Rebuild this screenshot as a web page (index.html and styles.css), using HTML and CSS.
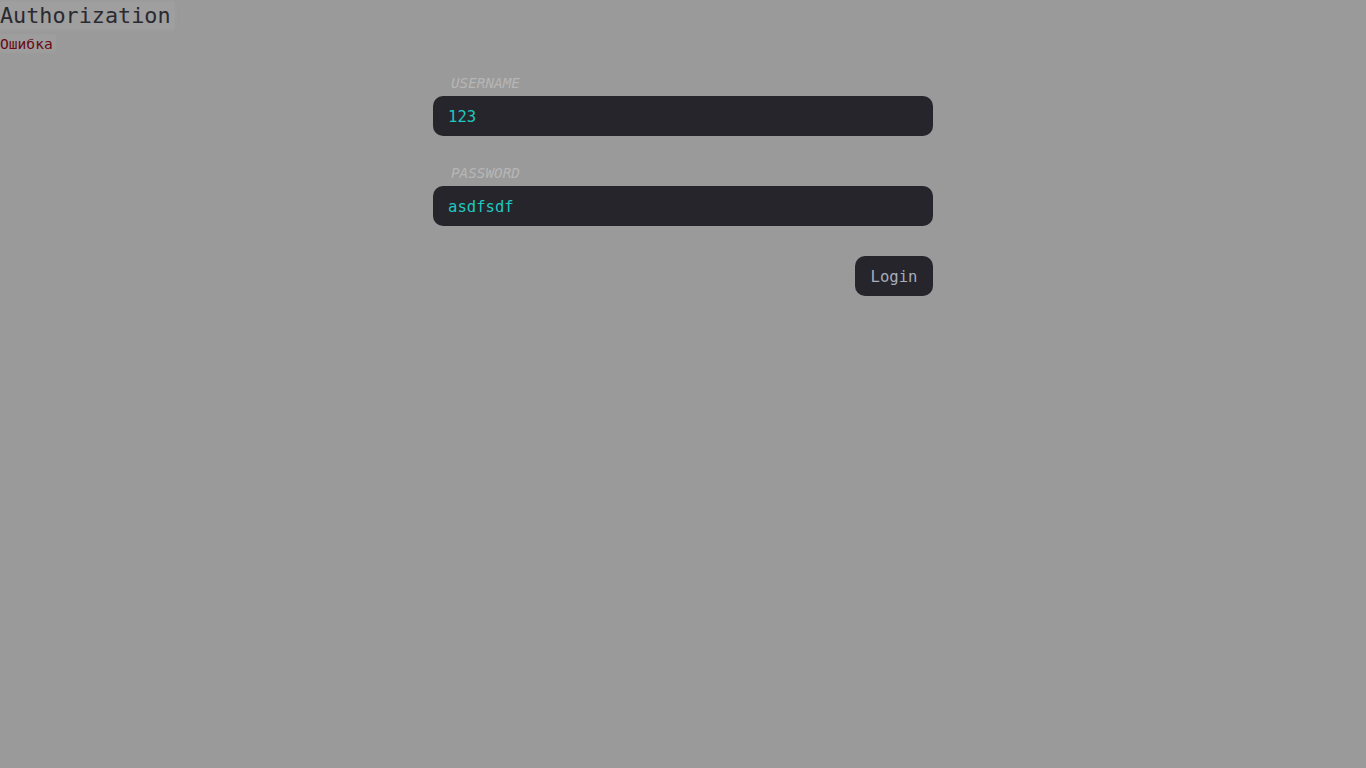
FILE: index.html
```html
<!DOCTYPE html>
<html>
<head>
<meta charset="utf-8">
<link rel="stylesheet" href="styles.css">
</head>
<body>
<header class="head">
  <h1 class="title"><span>Authorization</span></h1>
  <div class="error"><span>Ошибка</span></div>
</header>
<form class="form">
  <div class="field">
    <label class="label">USERNAME</label>
    <div class="input">123</div>
  </div>
  <div class="field">
    <label class="label">PASSWORD</label>
    <div class="input">asdfsdf</div>
  </div>
  <div class="actions">
    <button type="button" class="btn">Login</button>
  </div>
</form>
</body>
</html>
```
FILE: styles.css
```css
html, body {
  margin: 0;
  padding: 0;
  background: #9a9a9a;
  font-family: "DejaVu Sans Mono", "Liberation Mono", monospace;
}
.head {
  display: flex;
  flex-direction: column;
  align-items: flex-start;
}
.title {
  margin: 0;
  font-size: 21.8px;
  font-weight: normal;
  line-height: 32px;
  height: 32px;
  color: #2a2a30;
}
.title span {
  background: #9f9f9f;
  box-shadow: 0 0 3px 1px #9f9f9f;
  padding: 1px 3px 1px 0;
}
.error {
  font-size: 14.6px;
  line-height: 24px;
  color: #6a0a12;
}
.error span {
  background: #9e9e9e;
  box-shadow: 0 0 2px 1px #9e9e9e;
  padding: 0 2px 0 0;
}
.form {
  width: 500px;
  margin: 17px auto 0;
  display: flex;
  flex-direction: column;
}
.field {
  display: flex;
  flex-direction: column;
  margin-bottom: 27px;
}
.field + .field {
  margin-bottom: 30px;
}
.label {
  font-size: 14.3px;
  font-style: italic;
  line-height: 20px;
  color: #b6b6b6;
  padding-left: 18px;
  margin-bottom: 3px;
}
.input {
  height: 40px;
  box-sizing: border-box;
  background: #25252b;
  border-radius: 10px;
  padding: 1px 15px 0;
  font-size: 15.6px;
  line-height: 40px;
  color: #1fc8c0;
}
.actions {
  display: flex;
  justify-content: flex-end;
}
.btn {
  height: 40px;
  width: 78px;
  background: #25252b;
  border: none;
  border-radius: 10px;
  font-family: inherit;
  font-size: 15.6px;
  color: #a9adba;
  padding: 2px 0 0;
}
```
